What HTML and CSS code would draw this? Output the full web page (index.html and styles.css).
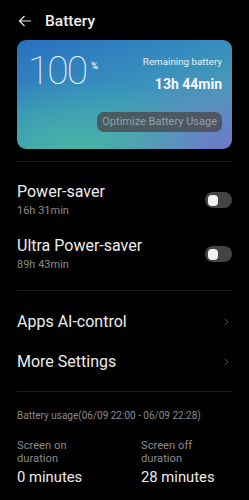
FILE: index.html
```html
<!DOCTYPE html>
<html>
<head>
<meta charset="utf-8">
<link rel="stylesheet" href="styles.css">
</head>
<body>
<div class="page">
  <header class="topbar">
    <svg class="back" width="14" height="12" viewBox="0 0 14 12"><path d="M13 6H1.5M6.5 1L1.5 6l5 5" fill="none" stroke="#e8e8e8" stroke-width="1.2"/></svg>
    <span class="title">Battery</span>
  </header>

  <section class="card">
    <div class="card-top">
      <div class="level"><span class="num">100</span><span class="pct">%</span></div>
      <div class="remain">
        <div class="remain-label">Remaining battery</div>
        <div class="remain-val">13h 44min</div>
      </div>
    </div>
    <div class="card-bottom">
      <span class="optimize">Optimize Battery Usage</span>
    </div>
  </section>

  <div class="divider first"></div>

  <div class="group modes">
    <div class="row toggle-row">
      <div class="texts">
        <div class="label">Power-saver</div>
        <div class="sub">16h 31min</div>
      </div>
      <span class="toggle"><span class="knob"></span></span>
    </div>
    <div class="row toggle-row">
      <div class="texts">
        <div class="label">Ultra Power-saver</div>
        <div class="sub">89h 43min</div>
      </div>
      <span class="toggle"><span class="knob"></span></span>
    </div>
  </div>

  <div class="divider"></div>

  <div class="group links">
    <div class="row link-row">
      <span class="label">Apps AI-control</span>
      <svg class="chev" width="5" height="8" viewBox="0 0 5 8"><path d="M0.8 0.8L4 4L0.8 7.2" fill="none" stroke="#555" stroke-width="1"/></svg>
    </div>
    <div class="row link-row">
      <span class="label">More Settings</span>
      <svg class="chev" width="5" height="8" viewBox="0 0 5 8"><path d="M0.8 0.8L4 4L0.8 7.2" fill="none" stroke="#555" stroke-width="1"/></svg>
    </div>
  </div>

  <div class="divider"></div>

  <div class="usage">
    <div class="usage-title">Battery usage(06/09 22:00 - 06/09 22:28)</div>
    <div class="stats">
      <div class="stat">
        <div class="stat-label">Screen on<br>duration</div>
        <div class="stat-val">0 minutes</div>
      </div>
      <div class="stat">
        <div class="stat-label">Screen off<br>duration</div>
        <div class="stat-val">28 minutes</div>
      </div>
    </div>
  </div>
</div>
</body>
</html>
```

FILE: styles.css
```css
* { box-sizing: border-box; }
html, body { margin: 0; padding: 0; background: #000; }
body {
  width: 249px;
  height: 500px;
  overflow: hidden;
  font-family: Roboto, "Noto Sans", sans-serif;
  color: #ececec;
}
.page { padding: 0 17px; }

.topbar {
  height: 40px;
  display: flex;
  align-items: center;
  padding-top: 1px;
}
.back { margin-left: 1px; margin-right: 13px; }
.title { font-size: 15.5px; font-weight: 500; color: #f0f0f0; }

.card {
  height: 109px;
  border-radius: 9px;
  padding: 13px 10px 17px 11px;
  display: flex;
  flex-direction: column;
  justify-content: space-between;
  background:
    radial-gradient(ellipse 65% 65% at 25% 100%, rgba(70,185,160,0.75), rgba(70,185,160,0) 100%),
    radial-gradient(ellipse 60% 80% at 100% 100%, rgba(110,120,200,0.9), rgba(110,120,200,0) 100%),
    linear-gradient(160deg, #2870c0 0%, #3890bd 45%, #46a2b5 70%, #5a90c4 100%);
}
.card-top { display: flex; justify-content: space-between; align-items: flex-start; }
.level { display: flex; align-items: flex-start; }
.num { font-size: 39px; font-weight: 100; line-height: 36px; color: #f4f8fb; letter-spacing: -2px; }
.pct { font-size: 9.5px; font-weight: 700; margin-left: 5px; margin-top: 7px; color: #f4f8fb; }
.remain { text-align: right; padding-top: 3px; }
.remain-label { font-size: 9.8px; color: #e6f0f6; line-height: 12px; }
.remain-val { font-size: 14px; font-weight: 700; color: #f6f9fb; margin-top: 8px; line-height: 17px; }
.card-bottom { display: flex; justify-content: flex-end; }
.optimize {
  height: 20px;
  line-height: 20px;
  padding: 0 5px;
  border-radius: 7px;
  background: rgba(75,75,78,0.82);
  color: #8ea2ab;
  font-size: 11px;
}

.divider { height: 1px; background: #1e1e1e; }
.divider.first { margin-top: 12px; }

.row { display: flex; align-items: center; justify-content: space-between; }
.label { font-size: 16px; color: #ececec; line-height: 18px; }
.sub { font-size: 11px; color: #8a8a8a; line-height: 13px; margin-top: 3px; }
.modes { padding-top: 21px; padding-bottom: 19px; display: flex; flex-direction: column; gap: 20px; }
.toggle {
  width: 27px; height: 16px; border-radius: 8px; background: #444446;
  display: flex; align-items: center; padding-left: 3px;
}
.knob { width: 10px; height: 11px; border-radius: 4px; background: #f2f2f2; }

.links { padding-top: 22px; padding-bottom: 20px; display: flex; flex-direction: column; gap: 22px; }
.chev { margin-right: 3px; }

.usage { padding-top: 18px; }
.usage-title { font-size: 10px; color: #8a8a8a; line-height: 12px; }
.stats { display: grid; grid-template-columns: 124px 1fr; margin-top: 17px; }
.stat-label { font-size: 11.2px; color: #8a8a8a; line-height: 13px; }
.stat-val { font-size: 14.8px; color: #ececec; line-height: 18px; margin-top: 3px; }
```
